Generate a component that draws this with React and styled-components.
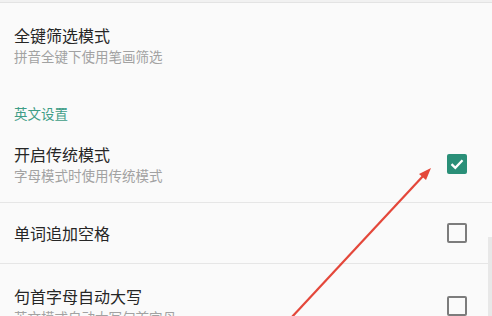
import styled, { createGlobalStyle } from "styled-components";

const GlobalStyle = createGlobalStyle`
  html, body {
    margin: 0;
    padding: 0;
    background: #fafafa;
  }
  body {
    font-family: "Noto Sans CJK SC", "Noto Sans", sans-serif;
    overflow: hidden;
  }
`;

const Screen = styled.div`
  position: relative;
  width: 492px;
  height: 316px;
  overflow: hidden;
  background: #fafafa;
`;

const TopEdge = styled.div`
  height: 2px;
  background: #f1f1f1;
  border-bottom: 1px solid #e3e3e3;
`;

const Item = styled.div`
  display: flex;
  align-items: center;
  padding: ${(p) => (p.$single ? "0 25px 0 14px" : "21px 25px 17px 14px")};
  height: ${(p) => (p.$single ? "60px" : "auto")};
  border-bottom: ${(p) => (p.$divider ? "1px solid #e6e6e6" : "none")};
`;

const Texts = styled.div`
  display: flex;
  flex-direction: column;
  flex: 1;
`;

const Title = styled.div`
  font-size: 16px;
  line-height: 22px;
  color: #262626;
`;

const Summary = styled.div`
  font-size: 13.5px;
  line-height: 20px;
  color: #a2a2a2;
  white-space: nowrap;
`;

const Category = styled.div`
  padding: 21px 14px 0;
  font-size: 13.5px;
  line-height: 18px;
  color: #3e9d86;
`;

const Box = styled.div`
  width: 20px;
  height: 20px;
  box-sizing: border-box;
  border-radius: 2px;
  display: flex;
  align-items: center;
  justify-content: center;
  background: ${(p) => (p.$checked ? "#2a8f78" : "transparent")};
  border: ${(p) => (p.$checked ? "none" : "2px solid #7c7c7c")};
`;

const Scrollbar = styled.div`
  position: absolute;
  right: 0;
  top: 237px;
  width: 4px;
  bottom: 0;
  background: #e8e8e8;
`;

const Overlay = styled.svg`
  position: absolute;
  left: 0;
  top: 0;
  pointer-events: none;
`;

const CheckBox = ({ checked }) => (
  <Box $checked={checked}>
    {checked && (
      <svg width="16" height="16" viewBox="0 0 16 16">
        <path d="M2.5 8.2 L6.3 11.8 L13.5 4.3" fill="none" stroke="#fff" strokeWidth="2.3" />
      </svg>
    )}
  </Box>
);

const Pref = ({ title, summary, checkbox, checked, divider }) => (
  <Item $single={!summary} $divider={divider}>
    <Texts>
      <Title>{title}</Title>
      {summary && <Summary>{summary}</Summary>}
    </Texts>
    {checkbox && <CheckBox checked={checked} />}
  </Item>
);

export default function App() {
  return (
    <Screen>
      <GlobalStyle />
      <TopEdge />
      <Pref title="全键筛选模式" summary="拼音全键下使用笔画筛选" />
      <Category>英文设置</Category>
      <Pref title="开启传统模式" summary="字母模式时使用传统模式" checkbox checked divider />
      <Pref title="单词追加空格" checkbox divider />
      <Pref title="句首字母自动大写" summary="英文模式自动大写句首字母" checkbox />
      <Scrollbar />
      <Overlay width="492" height="316" viewBox="0 0 492 316">
        <line x1="291" y1="318" x2="424" y2="175" stroke="#e4473a" strokeWidth="2.2" />
        <polygon points="431,168 419,174 426,180" fill="#e4473a" />
      </Overlay>
    </Screen>
  );
}
